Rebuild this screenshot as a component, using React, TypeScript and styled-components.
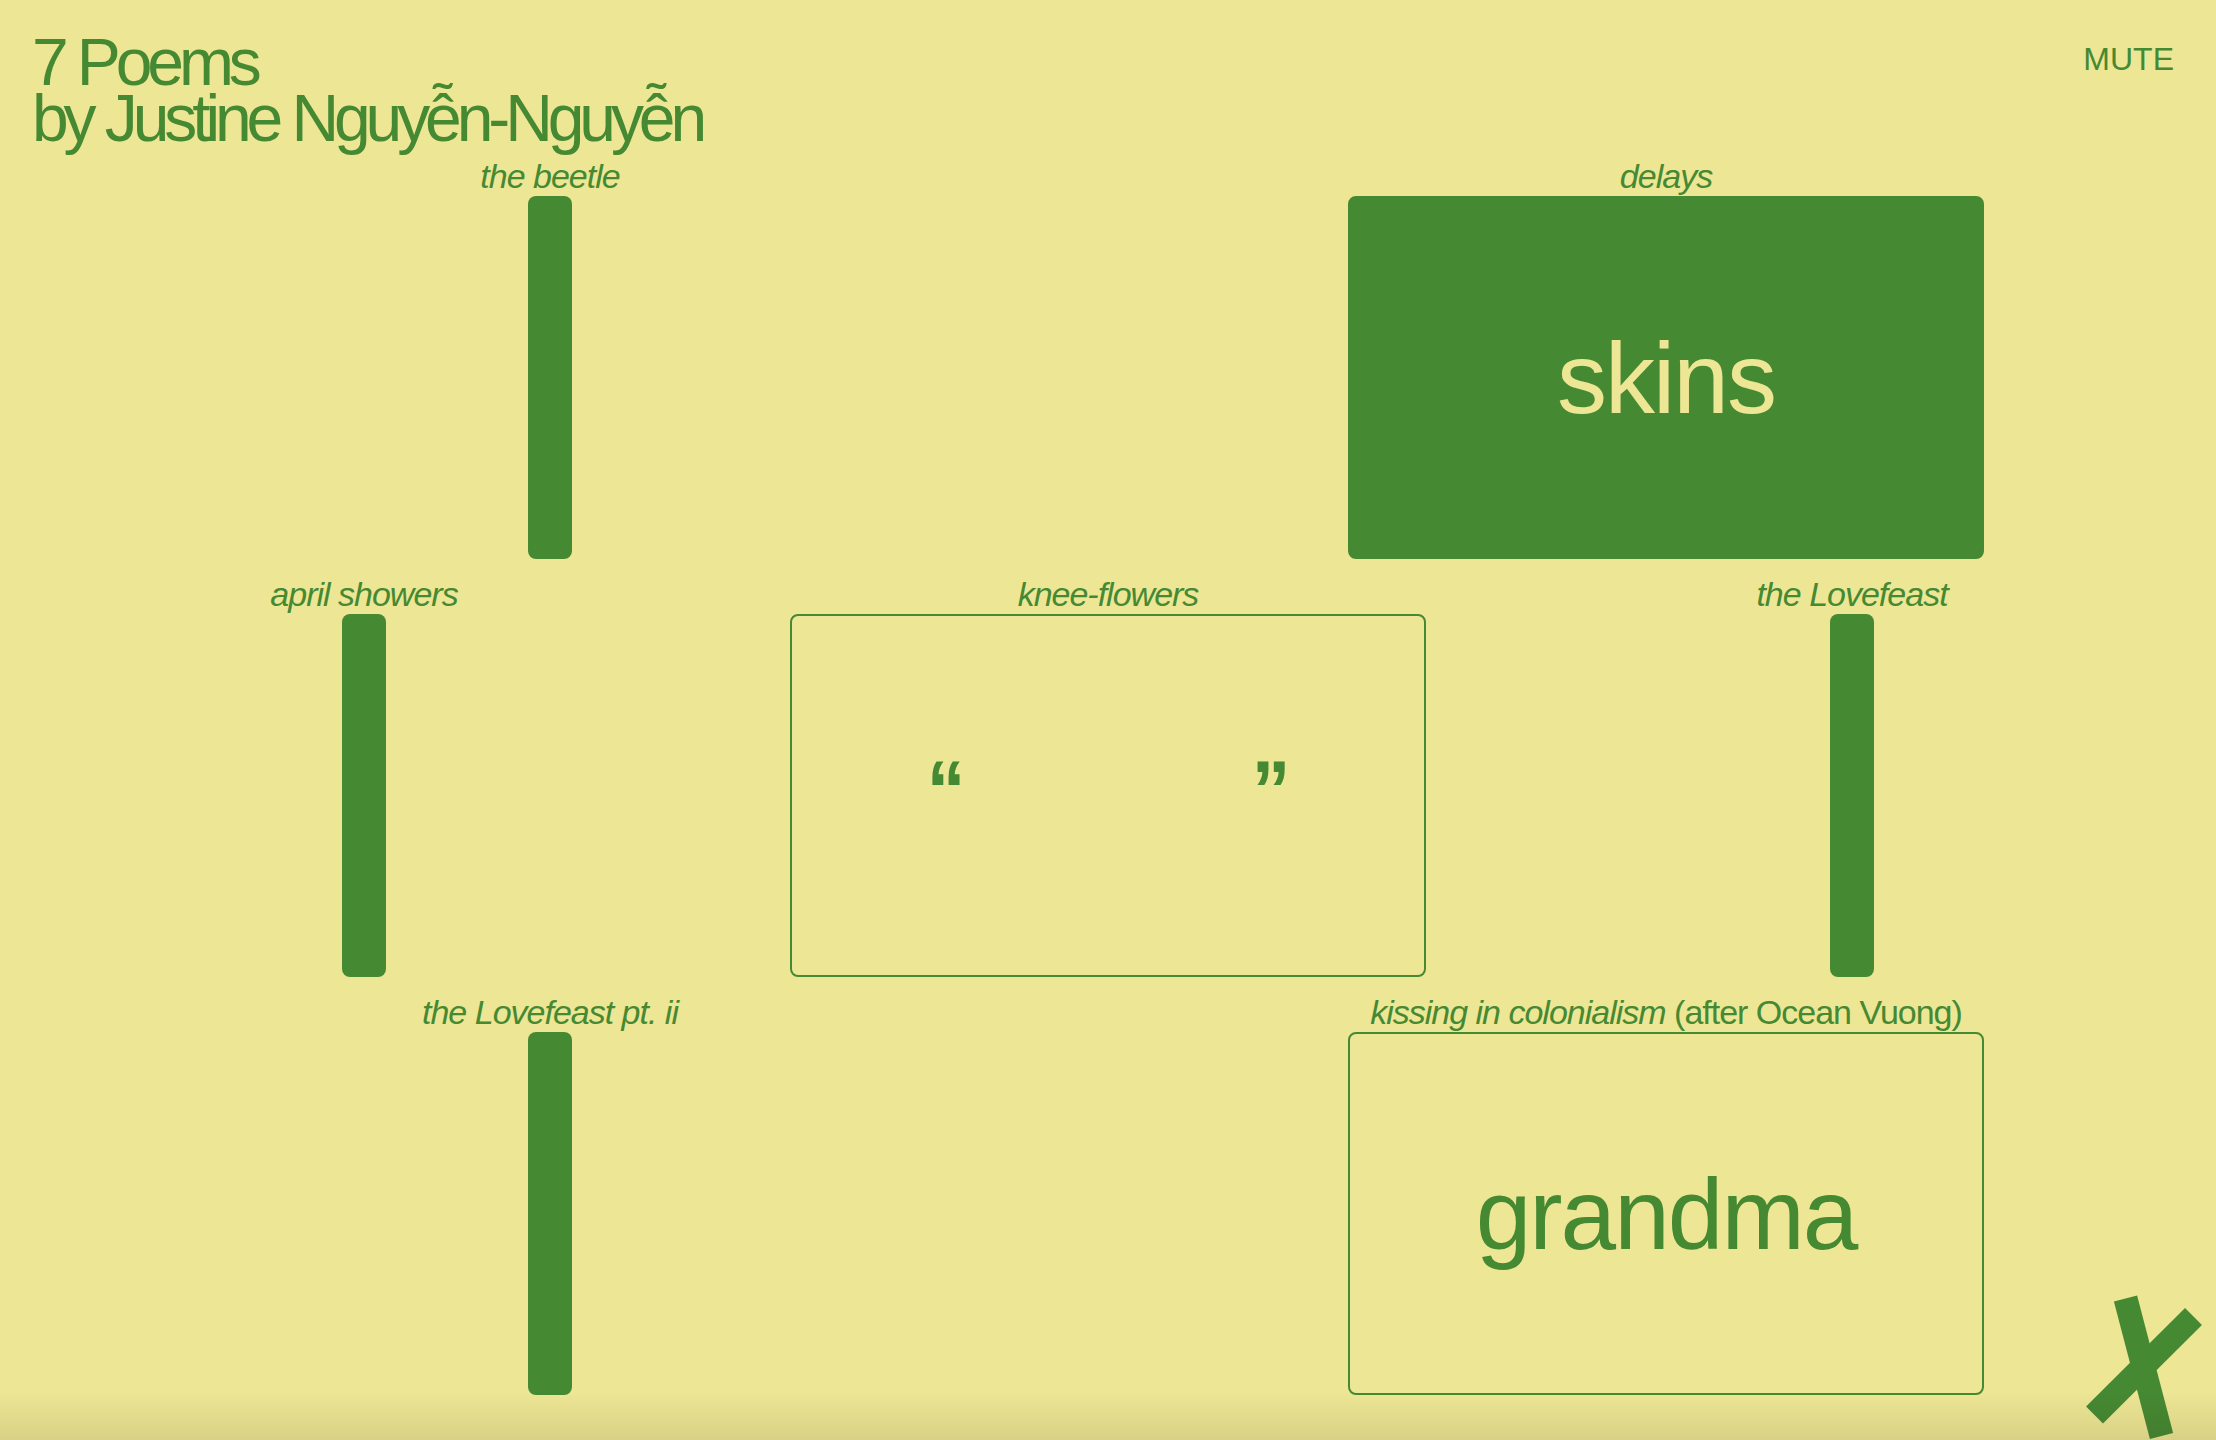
import React from "react";
import styled, { createGlobalStyle } from "styled-components";

const BG = "#ede695";
const GREEN = "#468933";

const Global = createGlobalStyle`
  html, body {
    margin: 0;
    padding: 0;
    background: ${BG};
    overflow: hidden;
  }
  body {
    font-family: "Liberation Sans", Arial, Helvetica, sans-serif;
    color: ${GREEN};
  }
`;

const Page = styled.div`
  min-height: 100vh;
  width: 100%;
  position: relative;
`;

const Header = styled.header`
  display: flex;
  justify-content: space-between;
  align-items: flex-start;
  padding: 34px 42px 0 32px;
`;

const Title = styled.h1`
  margin: 0;
  font-weight: 400;
  font-size: 66px;
  line-height: 56px;
  letter-spacing: -5.1px;
`;

const Mute = styled.button`
  margin-top: 7px;
  background: none;
  border: none;
  padding: 0;
  font-family: inherit;
  font-size: 32px;
  color: ${GREEN};
  cursor: pointer;
`;

const Rows = styled.main`
  display: flex;
  flex-direction: column;
  gap: 15px;
  margin: 10px -8px 0;
`;

const Row = styled.section<{ $cols: number }>`
  display: grid;
  grid-template-columns: repeat(${(p) => p.$cols}, 1fr);
`;

const PoemCell = styled.article`
  display: flex;
  flex-direction: column;
  align-items: center;
  min-width: 0;
`;

const Label = styled.div`
  height: 40px;
  line-height: 40px;
  font-size: 34px;
  letter-spacing: -1px;
  white-space: nowrap;
  em {
    font-style: italic;
  }
`;

const Bar = styled.div`
  width: 44px;
  height: 363px;
  border-radius: 8px;
  background: ${GREEN};
`;

const Card = styled.div<{ $filled?: boolean }>`
  box-sizing: border-box;
  width: 636px;
  height: 363px;
  border-radius: 8px;
  border: 2px solid ${GREEN};
  background: ${(p) => (p.$filled ? GREEN : "transparent")};
  color: ${(p) => (p.$filled ? BG : GREEN)};
  display: flex;
  align-items: center;
  justify-content: center;
`;

const BigWord = styled.span`
  font-size: 100px;
  line-height: 1;
  letter-spacing: -2px;
`;

const Quote = styled.div`
  display: flex;
  gap: 283px;
  font-size: 84px;
  font-weight: 700;
  line-height: 1;
  transform: translate(0px, -6px);
`;

const QuoteMark = styled.span`
  display: block;
  height: 84px;
  transform: scaleX(0.92);
`;

const Shade = styled.div`
  position: fixed;
  left: 0;
  right: 0;
  bottom: 0;
  height: 48px;
  background: linear-gradient(to bottom, rgba(0, 0, 0, 0), rgba(40, 30, 0, 0.1));
  pointer-events: none;
  z-index: 2;
`;

const Logo = styled.svg`
  position: fixed;
  right: 0;
  bottom: 0;
  width: 136px;
  height: 160px;
  z-index: 1;
`;

type PoemData = {
  title: React.ReactNode;
  kind: "bar" | "filled" | "outline" | "quote";
  word?: string;
};

const rows: PoemData[][] = [
  [
    { title: <em>the beetle</em>, kind: "bar" },
    { title: <em>delays</em>, kind: "filled", word: "skins" },
  ],
  [
    { title: <em>april showers</em>, kind: "bar" },
    { title: <em>knee-flowers</em>, kind: "quote" },
    { title: <em>the Lovefeast</em>, kind: "bar" },
  ],
  [
    { title: <em>the Lovefeast pt. ii</em>, kind: "bar" },
    {
      title: (
        <>
          <em>kissing in colonialism</em> (after Ocean Vuong)
        </>
      ),
      kind: "outline",
      word: "grandma",
    },
  ],
];

function PoemItem({ p }: { p: PoemData }) {
  return (
    <PoemCell>
      <Label>{p.title}</Label>
      {p.kind === "bar" && <Bar />}
      {p.kind === "filled" && (
        <Card $filled>
          <BigWord>{p.word}</BigWord>
        </Card>
      )}
      {p.kind === "outline" && (
        <Card>
          <BigWord>{p.word}</BigWord>
        </Card>
      )}
      {p.kind === "quote" && (
        <Card>
          <Quote>
            <QuoteMark>“</QuoteMark>
            <QuoteMark>”</QuoteMark>
          </Quote>
        </Card>
      )}
    </PoemCell>
  );
}

export default function App() {
  return (
    <Page>
      <Global />
      <Header>
        <Title>
          7 Poems
          <br />
          by Justine Nguyễn-Nguyễn
        </Title>
        <Mute>MUTE</Mute>
      </Header>
      <Rows>
        {rows.map((r, i) => (
          <Row key={i} $cols={r.length}>
            {r.map((p, j) => (
              <PoemItem key={j} p={p} />
            ))}
          </Row>
        ))}
      </Rows>
      <Logo viewBox="0 0 136 160">
        <line x1="45.5" y1="18.5" x2="81.5" y2="156" stroke={GREEN} strokeWidth="24" />
        <line x1="113.5" y1="36.5" x2="14.5" y2="135" stroke={GREEN} strokeWidth="24" />
      </Logo>
      <Shade />
    </Page>
  );
}
